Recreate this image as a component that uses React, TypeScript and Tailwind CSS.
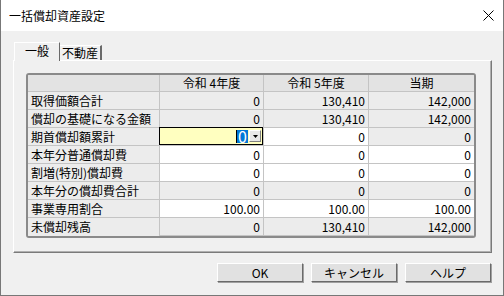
import React from "react"

type Cell = { v: string; edit?: boolean; white?: boolean }
type Row = { label: string; cells: Cell[] }

const rows: Row[] = [
  { label: "取得価額合計", cells: [{ v: "0" }, { v: "130,410" }, { v: "142,000" }] },
  { label: "償却の基礎になる金額", cells: [{ v: "0" }, { v: "130,410" }, { v: "142,000" }] },
  { label: "期首償却額累計", cells: [{ v: "0", edit: true }, { v: "0", white: true }, { v: "0" }] },
  { label: "本年分普通償却費", cells: [{ v: "0", white: true }, { v: "0", white: true }, { v: "0", white: true }] },
  { label: "割増(特別)償却費", cells: [{ v: "0", white: true }, { v: "0", white: true }, { v: "0", white: true }] },
  { label: "本年分の償却費合計", cells: [{ v: "0" }, { v: "0" }, { v: "0" }] },
  { label: "事業専用割合", cells: [{ v: "100.00", white: true }, { v: "100.00", white: true }, { v: "100.00", white: true }] },
  { label: "未償却残高", cells: [{ v: "0" }, { v: "130,410" }, { v: "142,000" }] },
]

const font = { fontFamily: '"MS UI Gothic", "Noto Sans CJK JP", sans-serif' }

function ValueCell({ cell, last }: { cell: Cell; last: boolean }) {
  const border = last ? "border-b border-[#c4c4c4]" : "border-r border-b border-[#c4c4c4]"
  if (cell.edit) {
    return (
      <div className={`h-[18px] ${border} relative`}>
        <div className="absolute -left-[1px] -top-[1px] right-0 bottom-0 border border-black bg-[#ffffc0] flex items-center justify-end pr-[1px]">
          <span className="bg-[#0078d7] text-white leading-[13px] px-[1px] mr-[1px] border-l border-black">{cell.v}</span>
          <div className="w-[12px] h-[12px] bg-[#e8e8e8] border-t border-l border-white border-r border-b border-r-[#808080] border-b-[#808080] flex items-center justify-center">
            <svg width="5" height="3" viewBox="0 0 5 3">
              <path d="M0 0h5L2.5 3z" fill="#000" />
            </svg>
          </div>
        </div>
      </div>
    )
  }
  return (
    <div
      className={`h-[18px] ${border} ${cell.white ? "bg-white" : "bg-[#ececec]"} flex items-center justify-end pr-[3px] text-[12px] text-black`}
    >
      {cell.v}
    </div>
  )
}

function Button({ label }: { label: string }) {
  return (
    <button className="w-[86px] h-[19px] bg-[#e1e1e1] border border-t-white border-l-white border-r-[#6a6a6a] border-b-[#6a6a6a] shadow-[1px_1px_0_#a0a0a0] text-[12px] text-black leading-none flex items-center justify-center">
      {label}
    </button>
  )
}

export default function App() {
  return (
    <div
      className="w-[504px] h-[296px] bg-[#f0f0f0] border-l border-r border-b border-[#777] flex flex-col text-black"
      style={font}
    >
      <div className="h-[31px] bg-white flex items-center justify-between pl-[8px] pr-[9px]">
        <span className="text-[12px]">一括償却資産設定</span>
        <svg width="11" height="11" viewBox="0 0 11 11">
          <path d="M0.5 0.5L10.5 10.5M10.5 0.5L0.5 10.5" stroke="#000" strokeWidth="1" />
        </svg>
      </div>

      <div className="pl-[12px] pt-[11px]">
        <div className="flex items-end h-[19px] relative z-10 -mb-[1px] pl-[1px]">
          <div className="w-[46px] h-[19px] bg-[#f0f0f0] border-t border-l border-white border-r border-r-[#6a6a6a] flex items-center justify-center text-[12px] pb-[2px]">
            一般
          </div>
          <div className="w-[42px] h-[15px] border-t border-[#ffffff] border-r-2 border-r-[#6a6a6a] flex items-center justify-center text-[12px] mb-[1px]">
            不動産
          </div>
        </div>

        <div className="w-[479px] h-[193px] border-t border-l border-white border-r border-b border-r-[#7a7a7a] border-b-[#7a7a7a] shadow-[inset_-1px_-1px_0_#b0b0b0] pt-[12px] pl-[12px]">
          <div className="w-[450px] border-2 border-[#8a8a8a] rounded-[3px] overflow-hidden bg-[#ececec]">
            <div className="grid grid-cols-[132px_104px_105px_105px]">
              <div className="h-[17px] bg-[#e3e3e3] border-r border-b border-[#c4c4c4]" />
              {["令和 4年度", "令和 5年度", "当期"].map((h, i) => (
                <div
                  key={h}
                  className={`h-[17px] bg-[#e3e3e3] border-b border-[#c4c4c4] ${i < 2 ? "border-r" : ""} flex items-center justify-center text-[12px]`}
                >
                  {h}
                </div>
              ))}
              {rows.map((r, ri) => (
                <React.Fragment key={r.label}>
                  <div
                    className={`h-[18px] bg-[#ececec] border-r border-[#c4c4c4] ${ri < rows.length - 1 ? "border-b" : ""} flex items-center pl-[3px] text-[12px] whitespace-nowrap`}
                  >
                    {r.label}
                  </div>
                  {r.cells.map((c, ci) => (
                    <ValueCell key={ci} cell={c} last={ci === 2} />
                  ))}
                </React.Fragment>
              ))}
            </div>
          </div>
        </div>

        <div className="flex justify-end gap-[8px] pr-[12px] mt-[10px]">
          <Button label="OK" />
          <Button label="キャンセル" />
          <Button label="ヘルプ" />
        </div>
      </div>
    </div>
  )
}
